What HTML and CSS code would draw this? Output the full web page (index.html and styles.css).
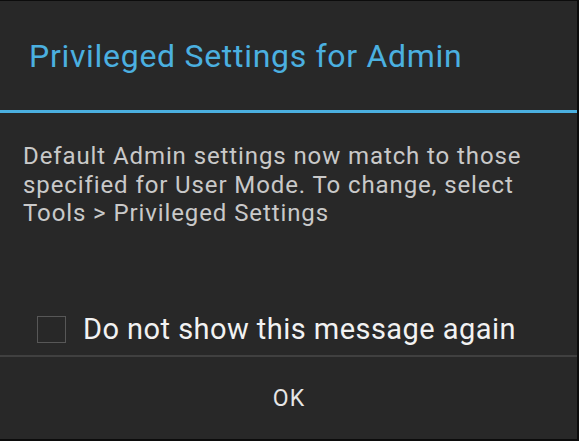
FILE: index.html
```html
<!DOCTYPE html>
<html>
<head>
<meta charset="utf-8">
<link rel="stylesheet" href="styles.css">
</head>
<body>
<div class="dialog">
  <div class="title">Privileged Settings for Admin</div>
  <div class="rule"></div>
  <div class="message">Default Admin settings now match to those specified for User Mode. To change, select Tools &gt; Privileged Settings</div>
  <label class="check">
    <span class="box"></span>
    <span class="check-label">Do not show this message again</span>
  </label>
  <div class="actions">
    <div class="ok">OK</div>
  </div>
</div>
</body>
</html>
```
FILE: styles.css
```css
html, body {
  margin: 0;
  padding: 0;
  background: #000;
}
body {
  width: 579px;
  height: 441px;
  overflow: hidden;
  font-family: Roboto, "Noto Sans", sans-serif;
}
.dialog {
  box-sizing: border-box;
  width: 579px;
  height: 441px;
  background: #282828;
  border-top: 1px solid #0c0c0c;
  border-right: 2px solid #0c0c0c;
  border-bottom: 2px solid #0c0c0c;
  display: flex;
  flex-direction: column;
}
.title {
  height: 109px;
  box-sizing: border-box;
  padding: 0 0 0 29px;
  display: flex;
  align-items: center;
  color: #4bb0e0;
  font-size: 32px;
  line-height: 36px;
  letter-spacing: 0.7px;
}
.rule {
  height: 3px;
  background: #4bb0e0;
}
.message {
  padding: 29px 30px 0 23px;
  color: #c9c9c9;
  font-size: 24px;
  line-height: 28.5px;
  letter-spacing: 0.9px;
  height: 190px;
  box-sizing: border-box;
}
.check {
  display: flex;
  align-items: center;
  padding-left: 37px;
  height: 52px;
  gap: 17px;
}
.box {
  width: 27px;
  height: 25px;
  border: 1.5px solid #575757;
  box-sizing: content-box;
  flex: none;
}
.check-label {
  color: #f2f2f2;
  font-size: 29px;
  letter-spacing: 0.45px;
}
.actions {
  border-top: 2px solid #404040;
  flex: 1;
  display: flex;
  align-items: center;
  justify-content: center;
}
.ok {
  color: #e6e6e6;
  font-size: 23px;
  letter-spacing: 1px;
  padding-left: 1px;
}
```
